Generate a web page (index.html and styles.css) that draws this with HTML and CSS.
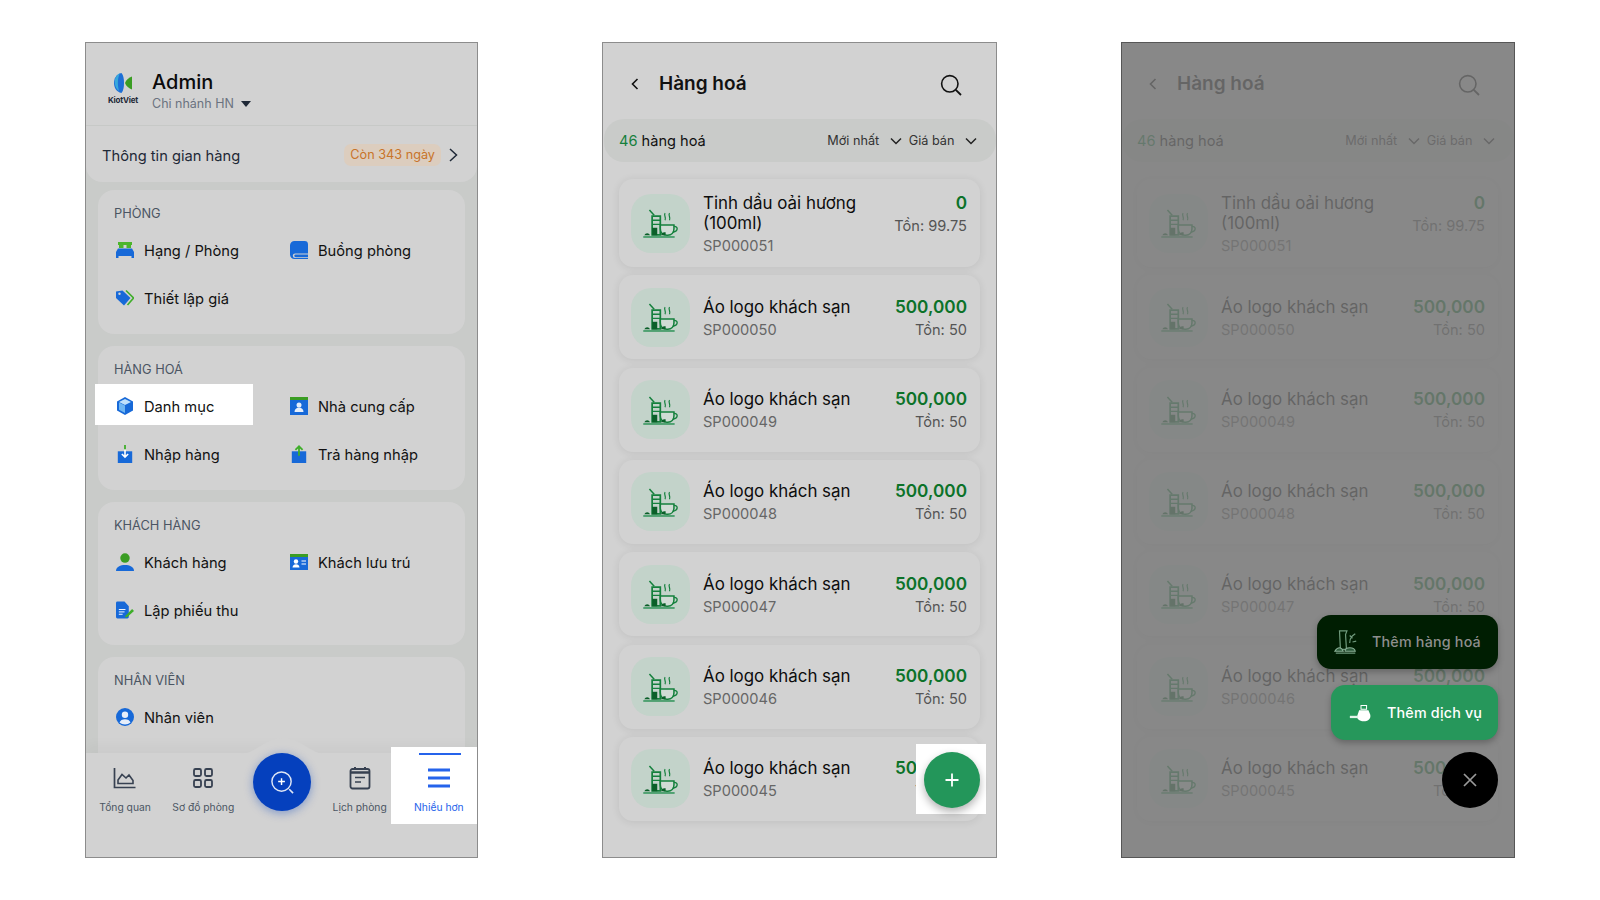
FILE: index.html
```html
<!DOCTYPE html>
<html lang="vi">
<head>
<meta charset="utf-8">
<title>KiotViet</title>
<link rel="stylesheet" href="styles.css">
</head>
<body>
<svg class="defs" aria-hidden="true">
  <symbol id="drink" viewBox="55 52 110 88">
    <path d="M76 58 90 73" fill="none" stroke="#15803d" stroke-width="4.500"/>
    <path d="M84 76h24v55H84z" fill="none" stroke="#15803d" stroke-width="5"/>
    <path d="M84 88h24M84 100h24" stroke="#15803d" stroke-width="4" fill="none"/>
    <path d="M84 110h15v22H84z" fill="#0b5f29"/>
    <path d="M108 102h40v11c0 12-8 19-18 19h-3c-11 0-19-7-19-19z" fill="#d0dcd5" stroke="#15803d" stroke-width="4.500"/>
    <path d="M148 106c12-1 14 14-3 17" fill="none" stroke="#15803d" stroke-width="4"/>
    <path d="M122 67c-5 7 4 11 0 21M135 67c-5 7 4 11 0 21" fill="none" stroke="#15803d" stroke-width="3.500"/>
    <path d="M61 132a10 12 0 0 1 17 0zM110 132c2-7 8-11 14-8l-1 8z" fill="#0b5f29"/>
    <path d="M58 137h92" stroke="#3f9a65" stroke-width="5"/>
  </symbol>
  <symbol id="search" viewBox="0 0 22 22">
    <circle cx="9.800" cy="9.800" r="8.200" fill="none" stroke="currentColor" stroke-width="1.600"/>
    <path d="m15.800 15.800 5.200 5.200" stroke="currentColor" stroke-width="1.800" fill="none"/>
  </symbol>
  <symbol id="down" viewBox="0 0 12 8">
    <path d="m1 1.500 5 5 5-5" fill="none" stroke="currentColor" stroke-width="1.500"/>
  </symbol>
</svg>

<div class="stage">
  <!-- Phone 1 -->
  <section class="phone phone-menu">
    <header class="acct">
      <div class="logo">
        <svg class="logo-mark" viewBox="0 0 20 20"><path d="M8.500 0C3 1 1 6 1 10s2 9 7.500 10c2-2.500 2.500-6 2.500-10S10.500 2.500 8.500 0z" fill="#1d6fd6"/><path d="M2 6c1-3 3-5 5-6-2 4-3 10-1 18-3-2-5-7-4-12z" fill="#38a8dc"/><path d="M19 3.500c-3 1-6 3.500-7 6.500 1 3 4 5.500 7 6.500z" fill="#3a9d23"/></svg>
        <span class="logo-text">KiotViet</span>
      </div>
      <div class="acct-text">
        <div class="acct-name">Admin</div>
        <div class="acct-branch">Chi nhánh HN <svg class="caret" viewBox="0 0 10 6"><path d="M0 0h10L5 6z" fill="#1f2937"/></svg></div>
      </div>
    </header>
    <div class="info">
      <span class="info-label">Thông tin gian hàng</span>
      <span class="badge">Còn 343 ngày</span>
      <svg class="chev" viewBox="0 0 9 14"><path d="m1 1 6.500 6L1 13" fill="none" stroke="#1f2937" stroke-width="1.500"/></svg>
    </div>
    <div class="sections">
      <div class="menu-card">
        <div class="menu-label">PHÒNG</div>
        <div class="menu-grid">
          <div class="item"><span class="ic"><svg viewBox="0 0 18 16"><path d="M2 0h14v3H2z" fill="#4cb52c"/><path d="M3 3h4.500v3H3zM10.500 3H15v3h-4.500z" fill="#4cb52c"/><path d="M2 6.500h14L18 10v4H0v-4z" fill="#1769d8"/><path d="M0 14h2.500v2H0zM15.500 14H18v2h-2.500z" fill="#1769d8"/></svg></span>Hạng / Phòng</div>
          <div class="item"><span class="ic"><svg viewBox="0 0 16 16"><path d="M4 0h9a3 3 0 0 1 3 3v8H4.500a2 2 0 0 0 0 4H16v1H4a4 4 0 0 1-4-4V4a4 4 0 0 1 4-4z" fill="#1769d8"/><path d="M16 12H5a1.200 1.200 0 0 0 0 2.400h11z" fill="#1769d8"/></svg></span>Buồng phòng</div>
          <div class="item"><span class="ic"><svg viewBox="0 0 18 16"><path d="M7 .5 15 8l-6.500 7.500L.5 8V1.500z" fill="#1769d8" transform="translate(-.5)"/><circle cx="3.500" cy="3.800" r="1.200" fill="#d2d2d2"/><path d="m10 .5 7.500 7.500-6 7" fill="none" stroke="#3fae2a" stroke-width="1.600"/></svg></span>Thiết lập giá</div>
        </div>
      </div>
      <div class="menu-card">
        <div class="menu-label">HÀNG HOÁ</div>
        <div class="menu-grid">
          <div class="item item-hl"><span class="ic"><svg viewBox="0 0 18 18"><path d="M9 0l8 4.500v9L9 18l-8-4.500v-9z" fill="#1769d8"/><path d="M9 2 15 5 9 8 3 5z" fill="#bfe0fb"/><path d="M3 5.500 9 8.500V16l-6-3.300z" fill="#6fb6f3"/></svg></span>Danh mục</div>
          <div class="item"><span class="ic"><svg viewBox="0 0 18 18"><path d="M0 0h18v3H0z" fill="#3a9d23"/><path d="M0 3h18v15H0z" fill="#1769d8"/><circle cx="9" cy="8" r="2.500" fill="#e6eefa"/><path d="M4.500 15c0-6 9-6 9 0z" fill="#e6eefa"/></svg></span>Nhà cung cấp</div>
          <div class="item"><span class="ic"><svg viewBox="0 0 16 20"><path d="M0 7h16v13H0z" fill="#1769d8" /><path d="M8 0v5" stroke="#3fae2a" stroke-width="2"/><path d="M8 5v8M4.500 10 8 13.500 11.500 10" fill="none" stroke="#fff" stroke-width="1.800"/></svg></span>Nhập hàng</div>
          <div class="item"><span class="ic"><svg viewBox="0 0 16 20"><path d="M0 7h16v13H0z" fill="#1769d8"/><path d="M8 12V2M4 5.500 8 1.500l4 4" fill="none" stroke="#3fae2a" stroke-width="2"/></svg></span>Trả hàng nhập</div>
        </div>
      </div>
      <div class="menu-card">
        <div class="menu-label">KHÁCH HÀNG</div>
        <div class="menu-grid">
          <div class="item"><span class="ic"><svg viewBox="0 0 16 16"><circle cx="8" cy="4.500" r="4.200" fill="#3a9d23"/><path d="M0 16c0-7 16-7 16 0z" fill="#1769d8"/></svg></span>Khách hàng</div>
          <div class="item"><span class="ic"><svg viewBox="0 0 18 16"><path d="M0 0h18v3H0z" fill="#3a9d23"/><path d="M0 3h18v13H0z" fill="#1769d8"/><circle cx="6" cy="7.500" r="2.200" fill="#fff"/><path d="M2.500 13.500c0-4.500 7-4.500 7 0z" fill="#fff"/><path d="M11.500 7h4.500M11.500 10h4.500" stroke="#fff" stroke-width="1.200"/></svg></span>Khách lưu trú</div>
          <div class="item"><span class="ic"><svg viewBox="0 0 19 18"><path d="M1.500 0H9l4.500 5v11.500a1.500 1.500 0 0 1-1.500 1.500H1.500A1.500 1.500 0 0 1 0 16.500v-15A1.500 1.500 0 0 1 1.500 0z" fill="#1769d8"/><path d="M3 8.500h7M3 11h6M3 13.500h4" stroke="#fff" stroke-width="1"/><path d="m10 15 7-7 2 2-7 6.500-2.500.5z" fill="#3fae2a"/></svg></span>Lập phiếu thu</div>
        </div>
      </div>
      <div class="menu-card">
        <div class="menu-label">NHÂN VIÊN</div>
        <div class="menu-grid">
          <div class="item"><span class="ic"><svg viewBox="0 0 18 18"><circle cx="9" cy="9" r="9" fill="#1769d8"/><circle cx="9" cy="6.800" r="3.200" fill="#e6eefa"/><path d="M3.500 14.500c1-4.500 10-4.500 11 0-3 2.500-8 2.500-11 0z" fill="#e6eefa"/></svg></span>Nhân viên</div>
        </div>
      </div>
    </div>
    <nav class="tabbar">
      <svg class="bump" viewBox="0 0 84 17"><path d="M0 17c14 0 24-16 42-16s28 16 42 16z" fill="#d2d2d2"/></svg>
      <div class="tab">
        <svg class="tab-ic" viewBox="0 0 24 22"><path d="M1.500 1v19.500h21" fill="none" stroke="#374151" stroke-width="1.700"/><path d="M5 16.500V13l4-5.500 4 3.500 3-3 4 5.500v3z" fill="none" stroke="#374151" stroke-width="1.600"/></svg>
        <span>Tổng quan</span>
      </div>
      <div class="tab">
        <svg class="tab-ic" viewBox="-1 -1 24 24"><rect x="2" y="2" width="7" height="7" rx="1.500" fill="none" stroke="#374151" stroke-width="1.800"/><rect x="13" y="2" width="7" height="7" rx="1.500" fill="none" stroke="#374151" stroke-width="1.800"/><rect x="2" y="13" width="7" height="7" rx="1.500" fill="none" stroke="#374151" stroke-width="1.800"/><rect x="13" y="13" width="7" height="7" rx="1.500" fill="none" stroke="#374151" stroke-width="1.800"/></svg>
        <span>Sơ đồ phòng</span>
      </div>
      <div class="tab"></div>
      <div class="tab">
        <svg class="tab-ic" viewBox="0 0 22 24"><rect x="1.500" y="3" width="19" height="19.500" rx="2" fill="none" stroke="#374151" stroke-width="1.800"/><path d="M1.500 6.500h19" stroke="#374151" stroke-width="2.500"/><path d="M6 1v3M16 1v3" stroke="#374151" stroke-width="2"/><path d="M6 11.500h10M6 16h6" stroke="#374151" stroke-width="1.700"/></svg>
        <span>Lịch phòng</span>
      </div>
      <div class="tab tab-active">
        <svg class="tab-ic" viewBox="0 0 24 22"><path d="M1 3h22M1 11h22M1 19h22" stroke="#2563eb" stroke-width="2.800"/></svg>
        <span>Nhiều hơn</span>
      </div>
      <div class="scan">
        <svg viewBox="0 0 26 26"><circle cx="12" cy="12" r="10" fill="none" stroke="#dfe6f5" stroke-width="1.500"/><path d="M12 8.500v7M8.500 12h7" stroke="#fff" stroke-width="1.500"/><path d="m20 20 4 4" stroke="#dfe6f5" stroke-width="1.700"/></svg>
      </div>
    </nav>
  </section>

  <!-- Phone 2 -->
  <section class="phone phone-goods">
    <header class="goods-head">
      <svg class="back" viewBox="0 0 8 12"><path d="M6.500 1 1.500 6l5 5" fill="none" stroke="#111" stroke-width="1.600"/></svg>
      <h1 class="goods-title">Hàng hoá</h1>
      <svg class="search"><use href="#search"/></svg>
    </header>
    <div class="filter">
      <span class="count"><b class="count-n">46</b> hàng hoá</span>
      <span class="sort">Mới nhất <svg class="down"><use href="#down"/></svg></span>
      <span class="sort">Giá bán <svg class="down"><use href="#down"/></svg></span>
    </div>
    <div class="list">
      <article class="card card-tall"><span class="tile"><svg><use href="#drink"/></svg></span><div class="card-body"><div class="card-main"><div class="card-title">Tinh dầu oải hương<br>(100ml)</div><div class="card-code">SP000051</div></div><div class="card-side"><div class="price">0</div><div class="stock">Tồn: 99.75</div></div></div></article>
      <article class="card"><span class="tile"><svg><use href="#drink"/></svg></span><div class="card-body"><div class="card-main"><div class="card-title">Áo logo khách sạn</div><div class="card-code">SP000050</div></div><div class="card-side"><div class="price">500,000</div><div class="stock">Tồn: 50</div></div></div></article>
      <article class="card"><span class="tile"><svg><use href="#drink"/></svg></span><div class="card-body"><div class="card-main"><div class="card-title">Áo logo khách sạn</div><div class="card-code">SP000049</div></div><div class="card-side"><div class="price">500,000</div><div class="stock">Tồn: 50</div></div></div></article>
      <article class="card"><span class="tile"><svg><use href="#drink"/></svg></span><div class="card-body"><div class="card-main"><div class="card-title">Áo logo khách sạn</div><div class="card-code">SP000048</div></div><div class="card-side"><div class="price">500,000</div><div class="stock">Tồn: 50</div></div></div></article>
      <article class="card"><span class="tile"><svg><use href="#drink"/></svg></span><div class="card-body"><div class="card-main"><div class="card-title">Áo logo khách sạn</div><div class="card-code">SP000047</div></div><div class="card-side"><div class="price">500,000</div><div class="stock">Tồn: 50</div></div></div></article>
      <article class="card"><span class="tile"><svg><use href="#drink"/></svg></span><div class="card-body"><div class="card-main"><div class="card-title">Áo logo khách sạn</div><div class="card-code">SP000046</div></div><div class="card-side"><div class="price">500,000</div><div class="stock">Tồn: 50</div></div></div></article>
      <article class="card"><span class="tile"><svg><use href="#drink"/></svg></span><div class="card-body"><div class="card-main"><div class="card-title">Áo logo khách sạn</div><div class="card-code">SP000045</div></div><div class="card-side"><div class="price">500,000</div><div class="stock">Tồn: 50</div></div></div></article>
    </div>
    <div class="fab-hl"></div>
    <div class="fab fab-green"><svg viewBox="0 0 16 16"><path d="M8 1.500v13M1.500 8h13" stroke="#fff" stroke-width="1.800"/></svg></div>
  </section>

  <!-- Phone 3 -->
  <section class="phone phone-dim">
    <header class="goods-head">
      <svg class="back" viewBox="0 0 8 12"><path d="M6.500 1 1.500 6l5 5" fill="none" stroke="#111" stroke-width="1.600"/></svg>
      <h1 class="goods-title">Hàng hoá</h1>
      <svg class="search"><use href="#search"/></svg>
    </header>
    <div class="filter">
      <span class="count"><b class="count-n">46</b> hàng hoá</span>
      <span class="sort">Mới nhất <svg class="down"><use href="#down"/></svg></span>
      <span class="sort">Giá bán <svg class="down"><use href="#down"/></svg></span>
    </div>
    <div class="list">
      <article class="card card-tall"><span class="tile"><svg><use href="#drink"/></svg></span><div class="card-body"><div class="card-main"><div class="card-title">Tinh dầu oải hương<br>(100ml)</div><div class="card-code">SP000051</div></div><div class="card-side"><div class="price">0</div><div class="stock">Tồn: 99.75</div></div></div></article>
      <article class="card"><span class="tile"><svg><use href="#drink"/></svg></span><div class="card-body"><div class="card-main"><div class="card-title">Áo logo khách sạn</div><div class="card-code">SP000050</div></div><div class="card-side"><div class="price">500,000</div><div class="stock">Tồn: 50</div></div></div></article>
      <article class="card"><span class="tile"><svg><use href="#drink"/></svg></span><div class="card-body"><div class="card-main"><div class="card-title">Áo logo khách sạn</div><div class="card-code">SP000049</div></div><div class="card-side"><div class="price">500,000</div><div class="stock">Tồn: 50</div></div></div></article>
      <article class="card"><span class="tile"><svg><use href="#drink"/></svg></span><div class="card-body"><div class="card-main"><div class="card-title">Áo logo khách sạn</div><div class="card-code">SP000048</div></div><div class="card-side"><div class="price">500,000</div><div class="stock">Tồn: 50</div></div></div></article>
      <article class="card"><span class="tile"><svg><use href="#drink"/></svg></span><div class="card-body"><div class="card-main"><div class="card-title">Áo logo khách sạn</div><div class="card-code">SP000047</div></div><div class="card-side"><div class="price">500,000</div><div class="stock">Tồn: 50</div></div></div></article>
      <article class="card"><span class="tile"><svg><use href="#drink"/></svg></span><div class="card-body"><div class="card-main"><div class="card-title">Áo logo khách sạn</div><div class="card-code">SP000046</div></div><div class="card-side"><div class="price">500,000</div><div class="stock">Tồn: 50</div></div></div></article>
      <article class="card"><span class="tile"><svg><use href="#drink"/></svg></span><div class="card-body"><div class="card-main"><div class="card-title">Áo logo khách sạn</div><div class="card-code">SP000045</div></div><div class="card-side"><div class="price">500,000</div><div class="stock">Tồn: 50</div></div></div></article>
    </div>
    <div class="scrim"></div>
    <div class="actions">
      <div class="action action-dark">
        <svg class="action-ic" viewBox="0 0 28 28"><path d="M7 2h8l-1.500 4 1 16H8z" fill="none" stroke="#6f9a7c" stroke-width="1.300"/><path d="M2 24c3-5 7-5 9 0zM13 24c0-5 10-5 11 0z" fill="#2c5a3a" stroke="#8ab096" stroke-width="1.200"/><path d="M18 15c0-6 3-8 6-10M21 10l-3-3M21 14l4-1" fill="none" stroke="#6f9a7c" stroke-width="1.300"/><path d="M3 26h21" stroke="#6f9a7c" stroke-width="1.300"/></svg>
        <span>Thêm hàng hoá</span>
      </div>
      <div class="action action-green">
        <svg class="action-ic" viewBox="0 0 28 20"><path d="M14 2h6v4h-6z" fill="none" stroke="#fff" stroke-width="1.100"/><path d="M12 7h10l2 5c1 5-3 7-7 7-5 0-8-3-7-6z" fill="#fff"/><path d="M2 13h9v2.500H2z" fill="#e3f4ea"/></svg>
        <span>Thêm dịch vụ</span>
      </div>
      <div class="fab fab-black"><svg viewBox="0 0 16 16"><path d="m2 2 12 12M14 2 2 14" stroke="#9a9a9a" stroke-width="1.700"/></svg></div>
    </div>
  </section>
</div>
</body>
</html>
```
FILE: styles.css
```css
* { box-sizing: border-box; }
html, body { margin: 0; height: 100%; background: #fff; }
body { font-family: Inter, "Noto Sans", sans-serif; color: #111; overflow: hidden; }
.defs { position: absolute; width: 0; height: 0; }

.stage { display: flex; gap: 124px; padding: 42px 0 0 85px; }
.phone {
  position: relative; flex: none; width: 394px; height: 816px;
  display: flex; flex-direction: column; overflow: hidden;
  background: #d2d2d2; border: 1px solid #8c8c8c;
}
.phone-menu { width: 393px; }
.phone-goods { width: 395px; padding-left: 1px; }
.phone-dim { border-color: #565656; }

/* Phone 1 */
.acct { flex: none; height: 83px; display: flex; align-items: flex-start; gap: 14px; padding: 27px 0 0 22px; border-bottom: 1px solid #c7c9c7; }
.logo { width: 30px; display: flex; flex-direction: column; align-items: center; padding-top: 3px; gap: 3px; }
.logo-mark { width: 20px; height: 20px; }
.logo-text { font-size: 8px; line-height: 9px; font-weight: 700; letter-spacing: -.2px; white-space: nowrap; color: #1f2937; }
.acct-name { font-size: 20px; line-height: 24px; font-weight: 500; color: #0b0b0b; }
.acct-branch { font-size: 12.500px; line-height: 18px; margin-top: 1px; color: #6b7280; display: flex; align-items: center; gap: 7px; }
.caret { width: 10px; height: 6px; }

.info { flex: none; height: 56px; display: flex; align-items: center; padding: 4px 19px 0 16px; background: #d2d2d2; border-radius: 0 0 16px 16px; position: relative; }
.info-label { flex: 1; font-size: 14.700px; color: #1f2937; }
.badge { font-size: 12.700px; line-height: 22px; padding: 0 6px; border-radius: 7px; background: #dccdbe; color: #c8742a; margin-top: -2px; }
.chev { width: 9px; height: 14px; margin-left: 8px; margin-top: -2px; }

.sections { flex: 1; min-height: 0; overflow: hidden; background: #c9cbc9; margin-top: -16px; padding: 24px 12px 0 12px; display: flex; flex-direction: column; gap: 12px; }
.menu-card { flex: none; height: 143.800px; background: #d2d2d2; border-radius: 16px; padding: 15px 0 0 16px; }
.menu-label { font-size: 12.800px; line-height: 18px; color: #4b5563; margin-bottom: 4px; }
.menu-grid { display: grid; grid-template-columns: 174px 174px; grid-auto-rows: 48px; }
.item { position: relative; isolation: isolate; display: flex; align-items: center; gap: 8px; font-size: 14.700px; color: #111; }
.ic { flex: none; width: 22px; height: 22px; display: flex; align-items: center; justify-content: center; margin-top: -2px; }
.ic svg { width: 18px; height: 18px; }
.item-hl::before { content: ""; position: absolute; z-index: -1; left: -19px; top: 1px; width: 158px; height: 41px; background: #fff; }

.tabbar { flex: none; position: relative; height: 104px; background: #d2d2d2; display: grid; grid-template-columns: repeat(5, 1fr); align-items: start; box-shadow: 0 -6px 14px rgba(0,0,0,.04); }
.bump { position: absolute; left: 155px; top: -16px; width: 84px; height: 17px; }
.tab { display: flex; flex-direction: column; align-items: center; padding-top: 13px; font-size: 10.300px; line-height: 14px; color: #4b5563; white-space: nowrap; }
.tab-ic { width: 24px; height: 24px; margin-bottom: 10px; }
.tab-active { position: relative; isolation: isolate; color: #2563eb; padding-left: 2px; }
.tab-active::before { content: ""; position: absolute; z-index: -1; left: -8px; right: 0; top: -6px; height: 77px; background: #fff; }
.tab-active::after { content: ""; position: absolute; left: 20px; width: 42px; top: 0; height: 2px; background: #2563eb; }
.scan { position: absolute; left: 167px; top: 0; width: 58px; height: 58px; border-radius: 50%; background: #0540bd; box-shadow: 0 2px 10px rgba(5,64,189,.4); display: flex; align-items: center; justify-content: center; }
.scan svg { width: 25px; height: 25px; }

/* Phone 2 */
.goods-head { flex: none; height: 76px; display: flex; align-items: center; padding: 5px 0 0 27px; }
.back { width: 8px; height: 12px; }
.goods-title { margin: 0 0 0 20px; flex: 1; font-size: 19px; line-height: 24px; font-weight: 600; color: #111; }
.search { width: 22px; height: 22px; margin-right: 34px; margin-top: 3px; color: #111; }
.filter { flex: none; height: 43px; display: flex; align-items: center; background: #c9cbc9; border-radius: 20px; padding: 0 19px 0 15px; font-size: 12.700px; color: #333; }
.count { flex: 1; font-size: 14.600px; color: #111; }
.count-n { font-weight: 400; color: #15803d; }
.sort { display: flex; align-items: center; gap: 10.500px; margin-left: 7px; }
.down { width: 12px; height: 8px; color: #222; }

.list { flex: none; display: flex; flex-direction: column; gap: 8.330px; padding: 17px 16px 2px 15px; }
.card { flex: none; height: 84px; display: flex; align-items: center; gap: 13px; padding: 0 13px 0 12px; background: #d2d2d2; border-radius: 14px; box-shadow: 0 1px 8px rgba(0,0,0,.09); }
.card-tall { height: 88px; }
.tile { flex: none; width: 59px; height: 59px; border-radius: 20px; background: #c3d3ca; display: flex; align-items: center; justify-content: center; }
.tile svg { width: 38px; height: 30px; }
.card-body { flex: 1; min-width: 0; display: flex; justify-content: space-between; align-items: flex-start; padding-top: 1px; }
.card-title { font-size: 16.900px; line-height: 20px; color: #0d0d0d; }
.card-code { font-size: 14.600px; line-height: 18px; margin-top: 4px; color: #666; }
.card-side { text-align: right; }
.price { font-size: 17.200px; line-height: 20px; font-weight: 600; color: #0c7229; }
.stock { font-size: 14.600px; line-height: 18px; margin-top: 4px; color: #555; }

.fab { width: 56px; height: 56px; border-radius: 50%; display: flex; align-items: center; justify-content: center; }
.fab svg { width: 16px; height: 16px; }
.fab-green { position: absolute; right: 16px; bottom: 49px; background: #23965a; box-shadow: 0 4px 8px rgba(0,0,0,.3); }
.fab-hl { position: absolute; right: 10px; bottom: 43px; width: 70px; height: 70px; background: #fff; }

/* Phone 3 */
.scrim { position: absolute; inset: 0; background: rgba(120,120,120,.82); }
.actions { position: absolute; right: 16px; bottom: 49px; display: flex; flex-direction: column; align-items: flex-end; }
.action { height: 54px; display: flex; align-items: center; border-radius: 14px; font-size: 14.300px; letter-spacing: .2px; font-weight: 500; box-shadow: 0 3px 6px rgba(0,0,0,.25); }
.action-dark { width: 181px; padding: 0 0 1px 16px; gap: 13px; background: #001e02; color: #8e8e8e; margin-bottom: 16px; }
.action-green { width: 167px; height: 55px; padding-left: 17px; gap: 13px; background: #26975b; color: #fff; margin-bottom: 12px; }
.action-ic { width: 26px; height: 26px; }
.fab-black { background: #000; }
```
